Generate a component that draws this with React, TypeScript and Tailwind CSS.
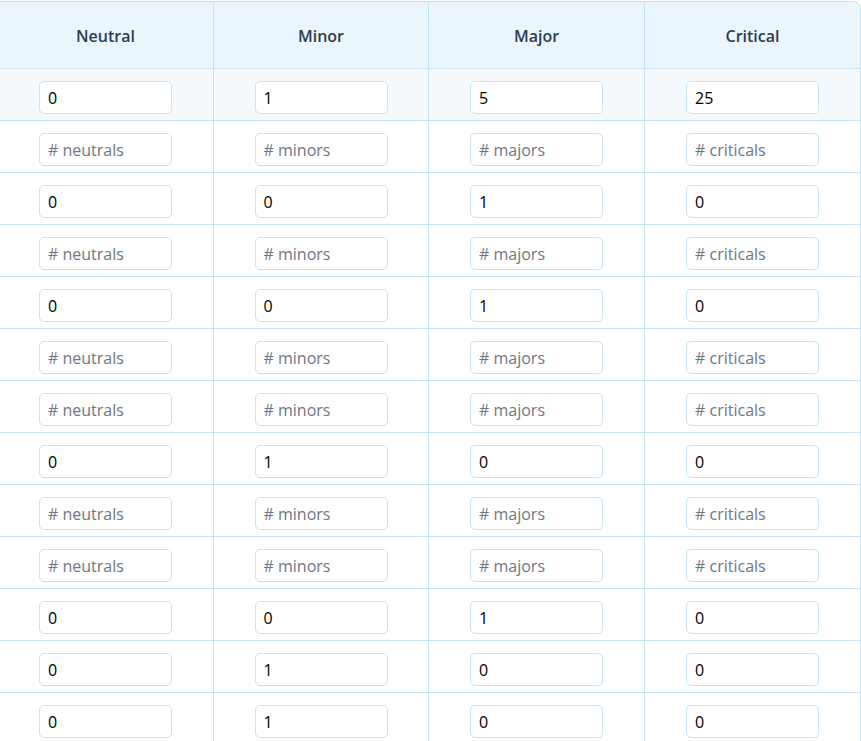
import React from 'react';

const cols = [
  { title: 'Neutral', ph: '# neutrals' },
  { title: 'Minor', ph: '# minors' },
  { title: 'Major', ph: '# majors' },
  { title: 'Critical', ph: '# criticals' },
];

// null row = empty inputs (placeholders only)
const rows: (string[] | null)[] = [
  ['0', '1', '5', '25'],
  null,
  ['0', '0', '1', '0'],
  null,
  ['0', '0', '1', '0'],
  null,
  null,
  ['0', '1', '0', '0'],
  null,
  null,
  ['0', '0', '1', '0'],
  ['0', '1', '0', '0'],
  ['0', '1', '0', '0'],
];

const widths = ['w-[216px]', 'w-[215px]', 'w-[216px]', 'w-[215px]'];

const App = () => {
  return (
    <div className="w-[861px] h-[741px] overflow-hidden bg-white" style={{ fontFamily: '"Open Sans", "Noto Sans", sans-serif' }}>
      <div className="mt-[1px] -ml-[3px] w-[864px] border border-[#c5e3f3] rounded-tr-lg overflow-hidden">
        <div className="flex bg-[#eaf5fc] border-b border-[#c5e3f3] h-[67px]">
          {cols.map((c, i) => (
            <div key={c.title} className={`${widths[i]} ${i < 3 ? 'border-r border-[#c5e3f3]' : ''} flex items-center justify-center pt-[2px] text-[16px] font-semibold text-[#2c3e50]`}>
              {c.title}
            </div>
          ))}
        </div>
        {rows.map((r, ri) => (
          <div key={ri} className={`flex h-[52px] border-b border-[#c5e3f3] ${ri === 0 ? 'bg-[#f3f9fd]' : 'bg-white'}`}>
            {cols.map((c, i) => (
              <div key={c.title} className={`${widths[i]} ${i < 3 ? 'border-r border-[#c5e3f3]' : ''} flex justify-center pt-[12px]`}>
                <input
                  readOnly
                  value={r ? r[i] : ''}
                  placeholder={c.ph}
                  className="w-[133px] h-[33px] rounded-[5px] border border-[#c8e3f2] bg-white pl-[8px] text-[16px] text-black placeholder:text-[#6f7780] outline-none"
                />
              </div>
            ))}
          </div>
        ))}
      </div>
    </div>
  );
};

export default App;
